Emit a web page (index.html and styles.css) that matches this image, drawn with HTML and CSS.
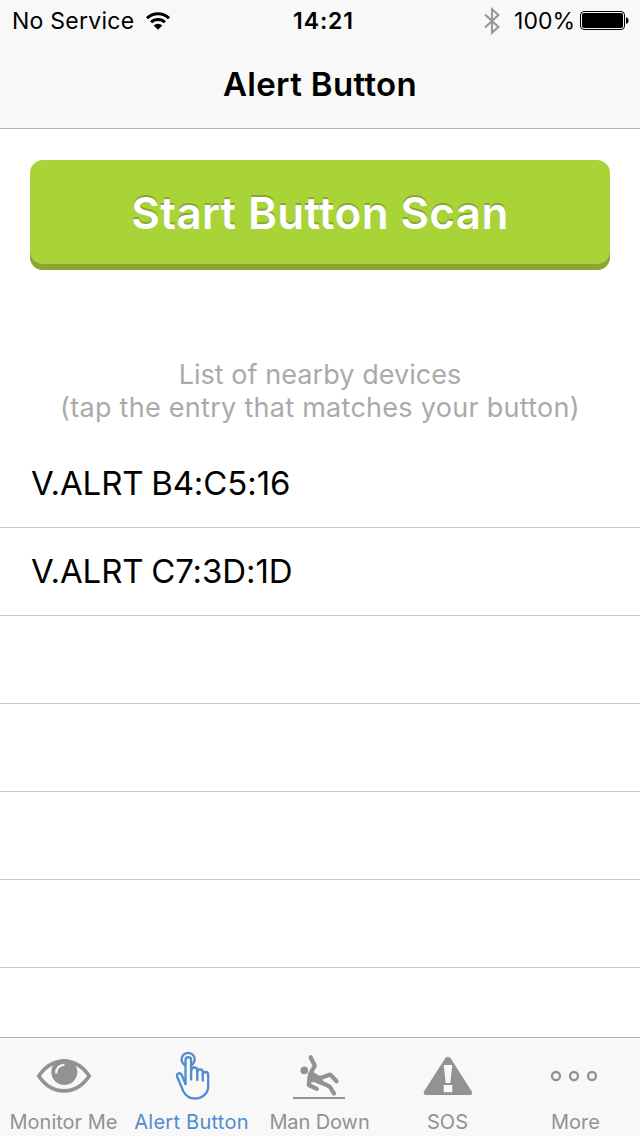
FILE: index.html
```html
<!DOCTYPE html>
<html lang="en">
<head>
    <meta charset="UTF-8">
    <meta name="viewport" content="width=device-width, initial-scale=1.0">
    <title>Alert Button</title>
    <link rel="stylesheet" href="styles.css">
</head>
<body>
    <header>
        <div class="status-bar">
            <div class="status-left">
                <span class="carrier">No Service</span>
                <svg class="wifi" width="26" height="20" viewBox="0 0 26 20">
                    <g fill="none" stroke="#000" stroke-width="3">
                        <path d="M2 7.2a15.6 15.6 0 0 1 22 0"/>
                        <path d="M6.1 11.3a9.8 9.8 0 0 1 13.8 0"/>
                    </g>
                    <path d="M13 18.8l-4.3-4.3a6.1 6.1 0 0 1 8.6 0z"/>
                </svg>
            </div>
            <span class="clock">14:21</span>
            <div class="status-right">
                <svg class="bluetooth" width="16" height="28" viewBox="0 0 16 28">
                    <path d="M1 7.5l13.4 12.6L8 25.8V2.2l6.4 5.7L1 20.5" fill="none" stroke="#999" stroke-width="2.1"/>
                </svg>
                <span class="percent">100%</span>
                <svg class="battery" width="50" height="20" viewBox="0 0 50 20">
                    <rect x=".5" y=".5" width="44" height="18" rx="3.5" fill="none" stroke="#000"/>
                    <rect x="2" y="2" width="41" height="15" rx="2"/>
                    <path d="M46 6.2c3.4.6 3.4 6 0 6.6z"/>
                </svg>
            </div>
        </div>
        <h1>Alert Button</h1>
    </header>

    <main>
        <button class="scan-button" type="button">Start Button Scan</button>

        <p class="hint">
            <span class="hint-title">List of nearby devices</span><br>
            <span class="hint-text">(tap the entry that matches your button)</span>
        </p>

        <ul class="device-list">
            <li>V.ALRT B4:C5:16</li>
            <li>V.ALRT C7:3D:1D</li>
            <li></li>
            <li></li>
            <li></li>
            <li></li>
        </ul>
    </main>

    <nav class="tab-bar">
        <a class="tab">
            <svg width="60" height="50" viewBox="0 0 60 50">
                <path d="M4.8 26C18 6.2 42 6.2 55.2 26 42 45.8 18 45.8 4.8 26z" fill="none" stroke="#929292" stroke-width="3.6"/>
                <circle cx="30.3" cy="22" r="13" fill="#929292"/>
                <path d="M22.2 23.5c-.2-5 3-8.600 8.2-8.600" fill="none" stroke="#f8f8f8" stroke-width="2.2"/>
            </svg>
            <span>Monitor Me</span>
        </a>
        <a class="tab active">
            <svg width="60" height="50" viewBox="0 0 60 50">
                <g fill="none" stroke="#508cce" stroke-width="2.3" stroke-linecap="round" stroke-linejoin="round">
                    <path d="M22.3 14.8a6.6 6.6 0 1 1 7.7 0"/>
                    <path d="M23.5 34V10a2.8 2.8 0 0 1 5.6 0v19.5"/>
                    <path d="M29.3 20.5c0-4 6-4 6 0V30"/>
                    <path d="M35.3 22c0-3.600 5.5-3.600 5.5 0v8.5"/>
                    <path d="M40.8 24.5c0-3.400 5.4-3.400 5.4.5v11.500c0 7-6 12-13 12-5.500 0-9.500-2.500-12-7.500l-5.900-14c-1.400-3.700 2.600-5 4.400-2.200L23.500 34"/>
                </g>
            </svg>
            <span>Alert Button</span>
        </a>
        <a class="tab man-down">
            <svg width="60" height="50" viewBox="0 0 60 50">
                <circle cx="14.3" cy="20.4" r="3.8" fill="#929292"/>
                <g fill="none" stroke="#929292" stroke-width="4.2" stroke-linecap="round" stroke-linejoin="round">
                    <path d="M20.6 7.3l4.2 8.400-4.700 8.300"/>
                    <path d="M19.5 27l-.7 8 8 3.800"/>
                    <path d="M29 28.500l11.200-4 6.400 6.700"/>
                    <path d="M28 31l11.700 5.700 4.300 6.800"/>
                </g>
                <path d="M18 24l5-2 9 5 2 8h-3l-7-3-5 1z" fill="#929292"/>
                <path d="M3 48h52" stroke="#929292" stroke-width="2"/>
            </svg>
            <span>Man Down</span>
        </a>
        <a class="tab">
            <svg width="60" height="50" viewBox="0 0 60 50">
                <path d="M27 8.5q2.8-3.600 5.8 0l21 33q1.200 3.500-2 3.500H8q-3.200 0-2-3.500z" fill="#929292"/>
                <path d="M25.7 15h8.600l-2 18h-4.600zM25.700 35h8.600v7.300h-8.600z" fill="#f8f8f8"/>
            </svg>
            <span>SOS</span>
        </a>
        <a class="tab">
            <svg width="60" height="50" viewBox="0 0 60 50">
                <g fill="none" stroke="#929292" stroke-width="2.3">
                    <circle cx="10" cy="26" r="4"/>
                    <circle cx="28" cy="26" r="4"/>
                    <circle cx="46" cy="26" r="4"/>
                </g>
            </svg>
            <span>More</span>
        </a>
    </nav>
</body>
</html>
```
FILE: styles.css
```css
* {
    box-sizing: border-box;
    margin: 0;
    padding: 0;
}

body {
    display: flex;
    flex-direction: column;
    height: 1136px;
    font-family: Inter, "Liberation Sans", sans-serif;
    background-color: #fff;
    color: #000;
    overflow: hidden;
}

header {
    height: 129px;
    background-color: #f8f8f8;
    border-bottom: 1px solid #b2b2b2;
}

.status-bar {
    display: grid;
    grid-template-columns: 1fr auto 1fr;
    align-items: center;
    height: 41px;
    padding: 0 10px 0 12px;
    font-size: 23px;
    line-height: 41px;
}

.status-left, .status-right {
    display: flex;
    align-items: center;
}

.status-left {
    gap: 11px;
}

.status-right {
    justify-content: flex-end;
}

.carrier, .clock, .percent {
    padding-top: 1px;
}

.carrier {
    letter-spacing: 0.25px;
}

.wifi {
    margin-bottom: 1px;
}

.clock {
    font-weight: 600;
    padding-left: 5px;
    letter-spacing: 0.9px;
}

.bluetooth {
    margin-right: 14px;
}

.battery {
    margin-left: 5px;
}

h1 {
    height: 87px;
    font-size: 33px;
    font-weight: 600;
    letter-spacing: 0.35px;
    line-height: 87px;
    text-align: center;
}

main {
    flex: 1;
    overflow: hidden;
}

.scan-button {
    display: block;
    width: 580px;
    height: 110px;
    margin: 31px 30px 0;
    padding-bottom: 4px;
    background-color: #a9d438;
    border: none;
    border-radius: 13px;
    box-shadow: inset 0 -6px 0 #8aa534;
    color: #fff;
    font-family: inherit;
    font-size: 44px;
    font-weight: 600;
    letter-spacing: 0.35px;
    text-shadow: 0 -2px 0 #8aa534;
}

.hint {
    margin-top: 88px;
    font-size: 27px;
    line-height: 33px;
    color: #aaa;
    text-align: center;
}

.hint-title {
    letter-spacing: 0.05px;
}

.hint-text {
    letter-spacing: 0.28px;
}

.device-list {
    margin-top: 16px;
    list-style-type: none;
}

.device-list li {
    height: 88px;
    padding-left: 31px;
    border-bottom: 1px solid #c8c8c8;
    font-size: 33px;
    letter-spacing: -0.1px;
    word-spacing: -1.5px;
    line-height: 87px;
}

.tab-bar {
    display: grid;
    grid-template-columns: repeat(5, 1fr);
    height: 99px;
    background-color: #f8f8f8;
    border-top: 1px solid #b2b2b2;
}

.tab {
    display: flex;
    flex-direction: column;
    align-items: center;
    padding-top: 12px;
    color: #929292;
    font-size: 20px;
    line-height: 24px;
    white-space: nowrap;
}

.tab span {
    margin-top: 10px;
    padding-right: 1px;
}

.tab.active {
    color: #508cce;
    letter-spacing: 0.25px;
}

.tab.man-down {
    letter-spacing: -0.1px;
}
```
